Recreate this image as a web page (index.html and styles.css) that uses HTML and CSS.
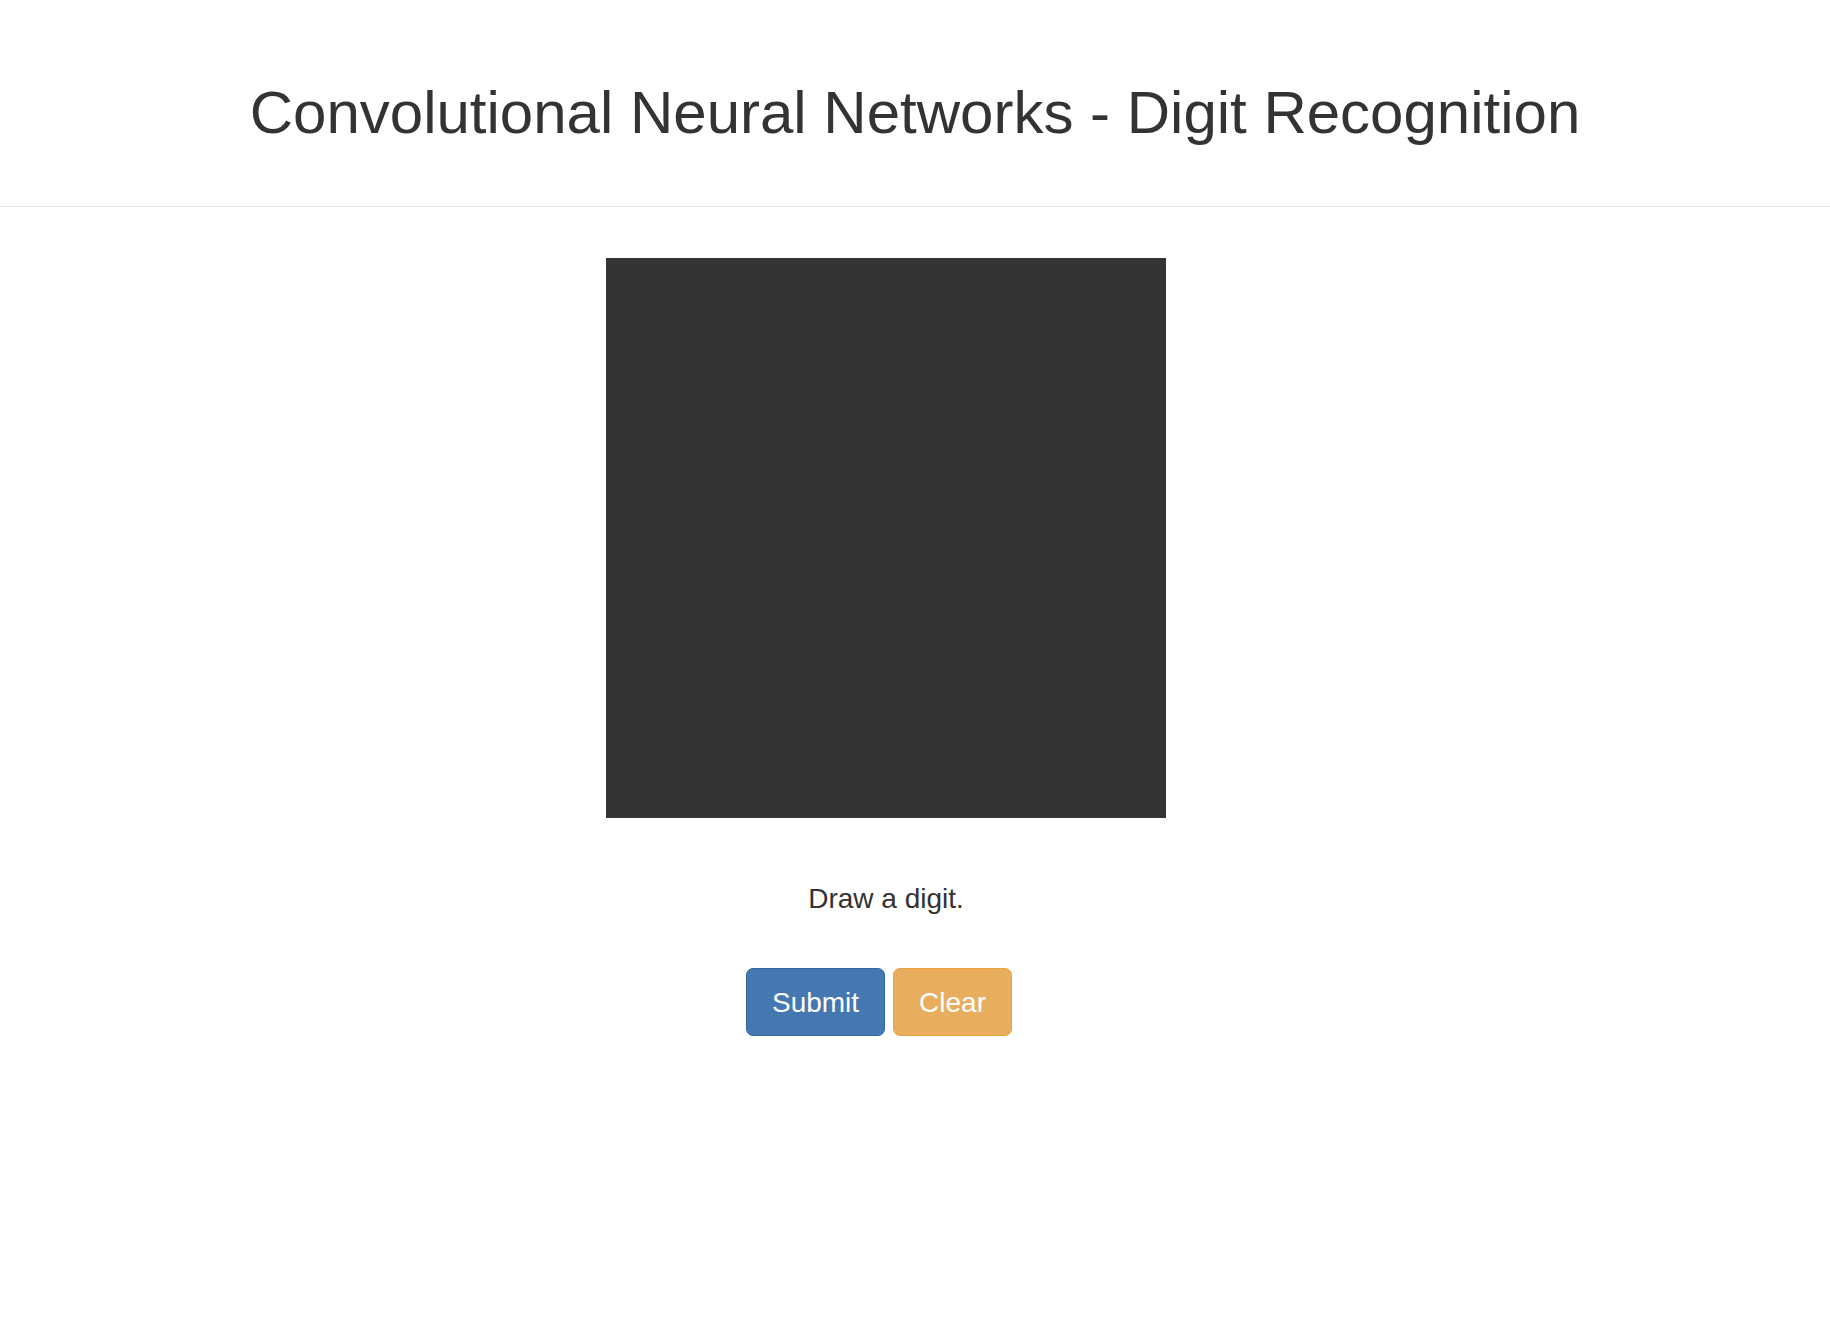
FILE: index.html
```html
<!DOCTYPE html>
<html lang="en">
<head>
<meta charset="utf-8">
<title>Digit Recognition</title>
<link rel="stylesheet" href="styles.css">
</head>
<body>
<header class="page-header">
  <h1 class="title">Convolutional Neural Networks - Digit Recognition</h1>
</header>
<main class="main">
  <div class="canvas"></div>
  <p class="hint">Draw a digit.</p>
  <div class="actions">
    <button class="btn btn-primary" type="button">Submit</button>
    <button class="btn btn-warning" type="button">Clear</button>
  </div>
</main>
</body>
</html>
```

FILE: styles.css
```css
html, body {
  margin: 0;
  padding: 0;
  background: #ffffff;
}

body {
  font-family: "Liberation Sans", Arial, Helvetica, sans-serif;
  color: #333333;
}

.page-header {
  padding: 80px 0 60px;
  border-bottom: 1px solid #e6e6e6;
  text-align: center;
}

.title {
  margin: 0;
  font-size: 60px;
  line-height: 66px;
  font-weight: 400;
  color: #333333;
}

.main {
  display: flex;
  flex-direction: column;
  align-items: center;
  padding: 51px 58px 0 0;
}

.canvas {
  width: 560px;
  height: 560px;
  background: #343434;
}

.hint {
  margin: 61px 0 0;
  font-size: 28px;
  line-height: 40px;
  color: #333333;
}

.actions {
  display: flex;
  gap: 8px;
  margin: 49px 14px 0 0;
}

.btn {
  font-family: "Liberation Sans", Arial, Helvetica, sans-serif;
  font-size: 28px;
  line-height: 40px;
  padding: 14px 25px 12px;
  border-radius: 7px;
  color: #ffffff;
  border: 1px solid transparent;
  cursor: pointer;
}

.btn-primary {
  background: #4577b0;
  border-color: #2f6aa3;
}

.btn-warning {
  background: #e8ae5d;
  border-color: #eba341;
}
```
